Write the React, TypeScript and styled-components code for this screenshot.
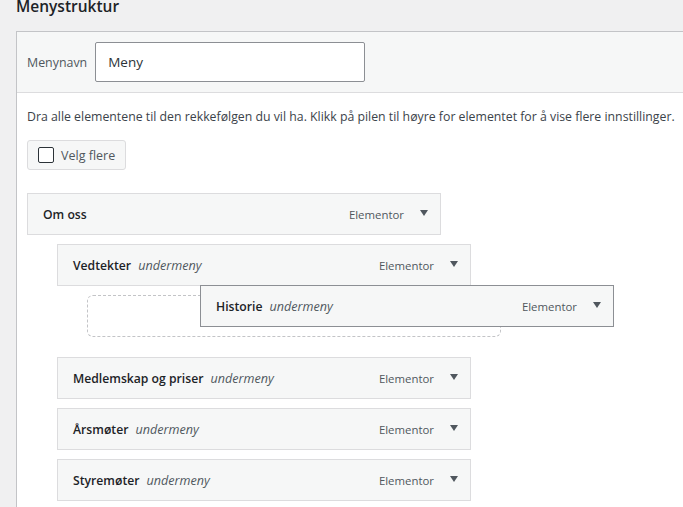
import styled, { createGlobalStyle } from "styled-components";

const GlobalStyle = createGlobalStyle`
  html, body {
    margin: 0;
    padding: 0;
    height: 100%;
    overflow: hidden;
    background: #f0f0f1;
  }
  body {
    font-family: "Open Sans", "Liberation Sans", sans-serif;
    color: #3c434a;
  }
`;

const Page = styled.div`
  width: 683px;
  height: 507px;
  padding-left: 16px;
  box-sizing: border-box;
  overflow: hidden;
`;

const Title = styled.h2`
  margin: 0;
  height: 31px;
  font-size: 15.5px;
  line-height: 12px;
  font-weight: 600;
  color: #1d2327;
`;

const Panel = styled.div`
  width: 720px;
  background: #fff;
  border: 1px solid #c3c4c7;
  border-right: none;
  box-sizing: border-box;
`;

const NameBar = styled.div`
  height: 61px;
  box-sizing: border-box;
  padding-left: 10px;
  display: flex;
  align-items: center;
  gap: 8px;
  background: #f6f7f7;
  border-bottom: 1px solid #dcdcde;
`;

const NameLabel = styled.label`
  font-size: 12.4px;
  color: #50575e;
`;

const NameInput = styled.div`
  width: 270px;
  height: 40px;
  box-sizing: border-box;
  padding-left: 12px;
  display: flex;
  align-items: center;
  background: #fff;
  border: 1px solid #8c8f94;
  border-radius: 2px;
  font-size: 13.5px;
  color: #2c3338;
`;

const Body = styled.div`
  position: relative;
  height: 420px;
  padding: 15px 10px 0;
`;

const Help = styled.p`
  margin: 0 0 14px;
  font-size: 12.3px;
  line-height: 18px;
  white-space: nowrap;
`;

const SelectButton = styled.div`
  width: 99px;
  height: 30px;
  box-sizing: border-box;
  padding-left: 10px;
  display: flex;
  align-items: center;
  gap: 7px;
  background: #f6f7f7;
  border: 1px solid #dcdcde;
  border-radius: 3px;
  font-size: 12.5px;
  color: #50575e;
`;

const Box = styled.span`
  width: 16px;
  height: 16px;
  box-sizing: border-box;
  background: #fff;
  border: 1px solid #2c3338;
  border-radius: 2px;
`;

const List = styled.div`
  margin-top: 23px;
  display: flex;
  flex-direction: column;
  gap: 9px;
`;

const Item = styled.div<{ $depth: number }>`
  width: 414px;
  height: 42px;
  margin-left: ${(p) => p.$depth * 30}px;
  box-sizing: border-box;
  padding: 0 12px 0 15px;
  display: flex;
  align-items: center;
  background: #f6f7f7;
  border: 1px solid #dcdcde;
`;

const DraggedItem = styled(Item)`
  position: absolute;
  left: 183px;
  top: 192px;
  margin-left: 0;
  border-color: #8c8f94;
  z-index: 2;
`;

const Placeholder = styled.div`
  width: 414px;
  height: 42px;
  margin-left: 60px;
  box-sizing: border-box;
  border: 1px dashed #c3c4c7;
  border-radius: 6px;
  margin-bottom: 11px;
`;

const ItemName = styled.span`
  font-size: 12.2px;
  font-weight: 600;
  color: #1d2327;
`;

const ItemKind = styled.em`
  margin-left: 7px;
  font-size: 12.6px;
  color: #50575e;
`;

const ItemType = styled.span`
  margin-left: auto;
  font-size: 11.4px;
  color: #50575e;
`;

const Arrow = styled.span`
  margin-left: 16px;
  margin-bottom: 2px;
  width: 0;
  height: 0;
  border-left: 4px solid transparent;
  border-right: 4px solid transparent;
  border-top: 6px solid #50575e;
`;

type MenuRowProps = { name: string; kind?: boolean; depth: number };

function MenuRow({ name, kind = true, depth }: MenuRowProps) {
  return (
    <Item $depth={depth}>
      <ItemName>{name}</ItemName>
      {kind && <ItemKind>undermeny</ItemKind>}
      <ItemType>Elementor</ItemType>
      <Arrow />
    </Item>
  );
}

export default function App() {
  return (
    <Page>
      <GlobalStyle />
      <Title>Menystruktur</Title>
      <Panel>
        <NameBar>
          <NameLabel>Menynavn</NameLabel>
          <NameInput>Meny</NameInput>
        </NameBar>
        <Body>
          <Help>
            Dra alle elementene til den rekkefølgen du vil ha. Klikk på pilen til høyre for
            elementet for å vise flere innstillinger.
          </Help>
          <SelectButton>
            <Box />
            Velg flere
          </SelectButton>
          <List>
            <MenuRow name="Om oss" kind={false} depth={0} />
            <MenuRow name="Vedtekter" depth={1} />
            <Placeholder />
            <MenuRow name="Medlemskap og priser" depth={1} />
            <MenuRow name="Årsmøter" depth={1} />
            <MenuRow name="Styremøter" depth={1} />
          </List>
          <DraggedItem $depth={0}>
            <ItemName>Historie</ItemName>
            <ItemKind>undermeny</ItemKind>
            <ItemType>Elementor</ItemType>
            <Arrow />
          </DraggedItem>
        </Body>
      </Panel>
    </Page>
  );
}
